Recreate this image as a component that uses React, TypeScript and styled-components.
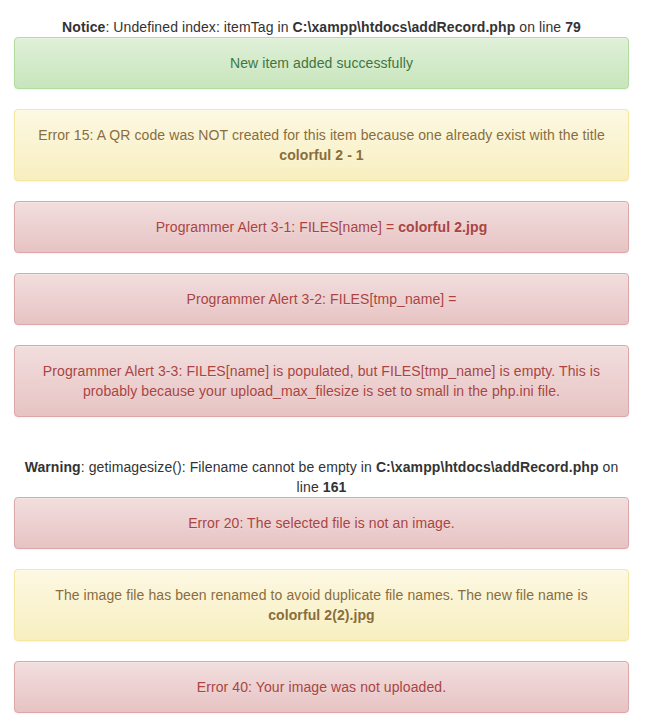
import React from "react";
import styled, { createGlobalStyle, css } from "styled-components";

const GlobalStyle = createGlobalStyle`
  html, body {
    margin: 0;
    padding: 0;
    background: #ffffff;
  }
  body {
    font-family: "Liberation Sans", Arial, Helvetica, sans-serif;
    font-size: 14px;
    line-height: 20px;
    letter-spacing: 0.09px;
    color: #333333;
  }
  * { box-sizing: border-box; }
`;

const Page = styled.div`
  width: 615px;
  margin-left: 14px;
  padding-top: 17px;
  text-align: center;
`;

const PhpMessage = styled.div`
  text-align: center;
  color: #333333;
`;

const Spacer = styled.div`
  height: 20px;
`;

type Variant = "success" | "warning" | "danger";

const variants: Record<Variant, ReturnType<typeof css>> = {
  success: css`
    color: #3c763d;
    background-color: #dff0d8;
    background-image: linear-gradient(to bottom, #dff0d8 0%, #c8e5bc 100%);
    border-color: #b2dba1;
  `,
  warning: css`
    color: #8a6d3b;
    background-color: #fcf8e3;
    background-image: linear-gradient(to bottom, #fcf8e3 0%, #f8efc0 100%);
    border-color: #f5e79e;
  `,
  danger: css`
    color: #a94442;
    background-color: #f2dede;
    background-image: linear-gradient(to bottom, #f2dede 0%, #e7c3c3 100%);
    border-color: #dca7a7;
  `,
};

const Alert = styled.div<{ $variant: Variant }>`
  padding: 15px;
  margin-bottom: 20px;
  border: 1px solid transparent;
  border-radius: 4px;
  text-align: center;
  text-shadow: 0 1px 0 rgba(255, 255, 255, 0.2);
  box-shadow: inset 0 1px 0 rgba(255, 255, 255, 0.25), 0 1px 2px rgba(0, 0, 0, 0.05);
  ${(p) => variants[p.$variant]}

  strong {
    font-weight: bold;
  }
`;

export default function App() {
  return (
    <>
      <GlobalStyle />
      <Page>
        <PhpMessage>
          <b>Notice</b>: Undefined index: itemTag in <b>C:\xampp\htdocs\addRecord.php</b> on line <b>79</b>
        </PhpMessage>
        <Alert $variant="success">New item added successfully</Alert>
        <Alert $variant="warning">
          Error 15: A QR code was NOT created for this item because one already exist with the title
          <br />
          <strong>colorful 2 - 1</strong>
        </Alert>
        <Alert $variant="danger">
          Programmer Alert 3-1: FILES[name] = <strong>colorful 2.jpg</strong>
        </Alert>
        <Alert $variant="danger">Programmer Alert 3-2: FILES[tmp_name] =</Alert>
        <Alert $variant="danger">
          Programmer Alert 3-3: FILES[name] is populated, but FILES[tmp_name] is empty. This is
          <br />
          probably because your upload_max_filesize is set to small in the php.ini file.
        </Alert>
        <Spacer />
        <PhpMessage>
          <b>Warning</b>: getimagesize(): Filename cannot be empty in <b>C:\xampp\htdocs\addRecord.php</b> on
          <br />
          line <b>161</b>
        </PhpMessage>
        <Alert $variant="danger">Error 20: The selected file is not an image.</Alert>
        <Alert $variant="warning">
          The image file has been renamed to avoid duplicate file names. The new file name is
          <br />
          <strong>colorful 2(2).jpg</strong>
        </Alert>
        <Alert $variant="danger">Error 40: Your image was not uploaded.</Alert>
      </Page>
    </>
  );
}
